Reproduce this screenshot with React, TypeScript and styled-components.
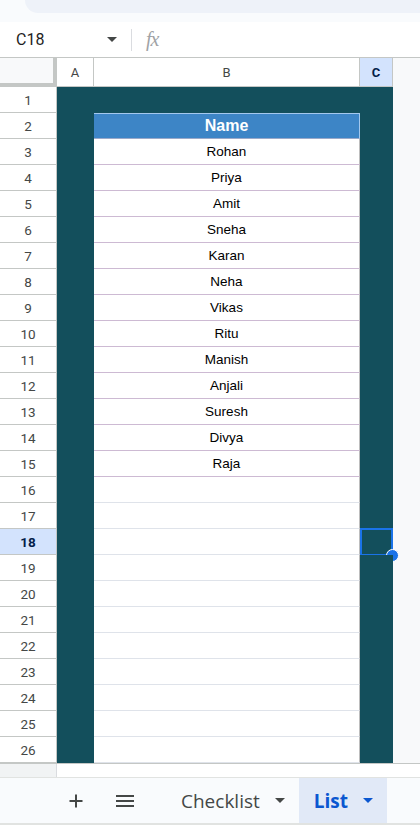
import React from "react";
import styled, { createGlobalStyle, css } from "styled-components";

const teal = "#134f5c";
const gridLine = "#c4c7c5";
const selectBlue = "#1a73e8";

const GlobalStyle = createGlobalStyle`
    html, body {
        margin: 0;
        padding: 0;
        background: #ffffff;
    }
    body {
        width: 420px;
        height: 825px;
        overflow: hidden;
        font-family: Roboto, "Liberation Sans", Arial, sans-serif;
    }
`;

const Page = styled.div`
    display: flex;
    flex-direction: column;
    width: 420px;
    height: 825px;
`;

const TopStrip = styled.div`
    height: 22px;
    background: #f9fbfd;
    display: flex;
`;

const ToolbarTail = styled.div`
    flex: 1;
    margin-left: 25px;
    height: 13px;
    background: #eef2f9;
    border-bottom-left-radius: 22px;
`;

const FormulaBar = styled.div`
    height: 35px;
    display: flex;
    align-items: center;
    border-bottom: 1px solid ${gridLine};
    background: #ffffff;
`;

const NameBox = styled.div`
    width: 91px;
    padding-left: 16px;
    font-size: 16px;
    color: #1f1f1f;
`;

const Caret = styled.span<{ color?: string; size?: number }>`
    display: inline-block;
    width: 0;
    height: 0;
    border-left: ${p => p.size ?? 5}px solid transparent;
    border-right: ${p => p.size ?? 5}px solid transparent;
    border-top: ${p => p.size ?? 5}px solid ${p => p.color ?? "#444746"};
`;

const Divider = styled.div`
    width: 1px;
    height: 22px;
    background: #dadce0;
    margin-left: 14px;
    margin-right: 14px;
`;

const Fx = styled.span`
    font-family: "Liberation Serif", "DejaVu Serif", serif;
    font-style: italic;
    font-size: 20px;
    color: #a0a3a6;
    letter-spacing: -1px;
`;

const Grid = styled.div`
    display: grid;
    grid-template-columns: 57px 37px 266px 33px 1fr;
    grid-template-rows: 29px repeat(26, 26px);
`;

const Corner = styled.div`
    background: #f8f9fa;
    border-right: 4px solid ${gridLine};
    border-bottom: 4px solid ${gridLine};
    box-sizing: border-box;
`;

const ColHeader = styled.div<{ active?: boolean }>`
    display: flex;
    align-items: center;
    justify-content: center;
    font-size: 13px;
    box-sizing: border-box;
    border-right: 1px solid ${gridLine};
    border-bottom: 1px solid ${gridLine};
    ${p => p.active
        ? css`
            background: #d3e3fd;
            color: #041e49;
            font-weight: 700;
        `
        : css`
            background: #ffffff;
            color: #444746;
        `}
`;

const OffGrid = styled.div`
    background: #f8f9fa;
`;

const RowHeader = styled.div<{ active?: boolean }>`
    display: flex;
    align-items: center;
    justify-content: center;
    font-size: 13.5px;
    box-sizing: border-box;
    border-bottom: 1px solid ${gridLine};
    border-right: 1px solid ${gridLine};
    ${p => p.active
        ? css`
            background: #d3e3fd;
            color: #041e49;
            font-weight: 700;
        `
        : css`
            background: #ffffff;
            color: #444746;
        `}
`;

const TealCell = styled.div`
    background: ${teal};
    position: relative;
`;

const NameCell = styled.div<{ filled?: boolean }>`
    display: flex;
    align-items: center;
    justify-content: center;
    box-sizing: border-box;
    background: #ffffff;
    font-family: "Liberation Sans", Arial, sans-serif;
    font-size: 13.5px;
    color: #000000;
    border-right: 1px solid #bdbdbd;
    border-bottom: 1px solid ${p => (p.filled ? "#cdbad3" : "#dfe3ea")};
`;

const HeadCell = styled(NameCell)`
    background: #3d85c6;
    color: #ffffff;
    font-weight: 700;
    font-size: 16px;
    border-top: 1px solid #a4c8ee;
    border-right: 1px solid #a4c8ee;
    border-bottom: 1px solid #9aa9c9;
`;

const Selection = styled.div`
    position: absolute;
    inset: -1px 0 -1px 0;
    border: 2px solid ${selectBlue};
`;

const Handle = styled.div`
    position: absolute;
    right: -8px;
    bottom: -8px;
    width: 11px;
    height: 11px;
    border-radius: 50%;
    background: ${selectBlue};
    border: 1.5px solid #ffffff;
`;

const ScrollBand = styled.div`
    height: 13px;
    display: flex;
    border-top: 1px solid ${gridLine};
`;

const ScrollCorner = styled.div`
    width: 56px;
    background: #f1f3f4;
    border-right: 1px solid #dadce0;
`;

const ScrollTrack = styled.div`
    flex: 1;
    background: #ffffff;
`;

const TabBar = styled.div`
    flex: 1;
    display: flex;
    align-items: stretch;
    background: #f9fbfd;
    border-top: 1px solid #e1e3e1;
    border-bottom: 2px solid #e1e3e1;
    box-sizing: border-box;
`;

const IconButton = styled.div<{ left: number }>`
    width: 40px;
    margin-left: ${p => p.left}px;
    display: flex;
    align-items: center;
    justify-content: center;
    color: #444746;
`;

const SheetTab = styled.div<{ active?: boolean; left?: number }>`
    display: flex;
    align-items: center;
    gap: 15px;
    margin-left: ${p => p.left ?? 0}px;
    padding: 0 14px 0 15px;
    font-family: "Open Sans", Roboto, sans-serif;
    font-size: 19px;
    font-weight: ${p => (p.active ? 700 : 500)};
    color: ${p => (p.active ? "#0b57d0" : "#444746")};
    background: ${p => (p.active ? "#e1e9f7" : "transparent")};
`;

const names = [
    "Rohan", "Priya", "Amit", "Sneha", "Karan", "Neha", "Vikas",
    "Ritu", "Manish", "Anjali", "Suresh", "Divya", "Raja",
];

const PlusIcon = () => (
    <svg width="16" height="16" viewBox="0 0 16 16">
        <path d="M8 1.5v13M1.5 8h13" stroke="#444746" strokeWidth="2" />
    </svg>
);

const MenuIcon = () => (
    <svg width="18" height="14" viewBox="0 0 18 14">
        <path d="M0 2h18M0 7h18M0 12h18" stroke="#444746" strokeWidth="1.8" />
    </svg>
);

export default function App() {
    const rows = Array.from({ length: 26 }, (_, i) => i + 1);

    return (
        <Page>
            <GlobalStyle />
            <TopStrip>
                <ToolbarTail />
            </TopStrip>
            <FormulaBar>
                <NameBox>C18</NameBox>
                <Caret />
                <Divider />
                <Fx>fx</Fx>
            </FormulaBar>
            <Grid>
                <Corner />
                <ColHeader>A</ColHeader>
                <ColHeader>B</ColHeader>
                <ColHeader active>C</ColHeader>
                <OffGrid />
                {rows.map(r => {
                    let bCell: React.ReactNode;
                    if (r === 1) bCell = <TealCell />;
                    else if (r === 2) bCell = <HeadCell>Name</HeadCell>;
                    else {
                        const name = names[r - 3];
                        bCell = <NameCell filled={!!name}>{name ?? ""}</NameCell>;
                    }
                    return (
                        <React.Fragment key={r}>
                            <RowHeader active={r === 18}>{r}</RowHeader>
                            <TealCell />
                            {bCell}
                            <TealCell>
                                {r === 18 && (
                                    <Selection>
                                        <Handle />
                                    </Selection>
                                )}
                            </TealCell>
                            <OffGrid />
                        </React.Fragment>
                    );
                })}
            </Grid>
            <ScrollBand>
                <ScrollCorner />
                <ScrollTrack />
            </ScrollBand>
            <TabBar>
                <IconButton left={56}><PlusIcon /></IconButton>
                <IconButton left={9}><MenuIcon /></IconButton>
                <SheetTab left={21}>
                    Checklist
                    <Caret />
                </SheetTab>
                <SheetTab active>
                    List
                    <Caret color="#0b57d0" />
                </SheetTab>
            </TabBar>
        </Page>
    );
}
